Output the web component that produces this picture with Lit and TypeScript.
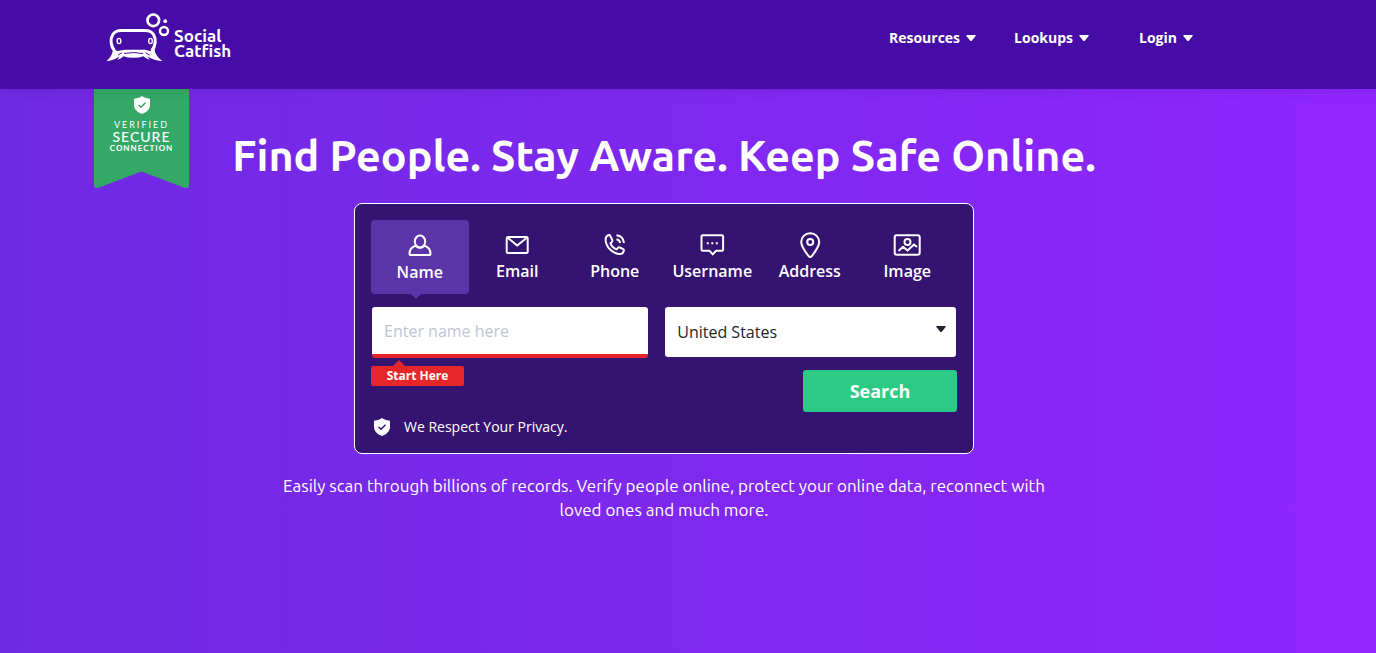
import { LitElement, html, css, svg } from "lit";
import { customElement, state } from "lit/decorators.js";

const icons: Record<string, unknown> = {
  Name: svg`<ellipse cx="14" cy="9.500" rx="5.200" ry="6"/><path d="M9.800 13.800c-4 1-6.300 4-6.300 8.200q0 .9.900.9h19.200q.9 0 .9-.9c0-4.200-2.300-7.200-6.300-8.200-2.200 2.500-6.200 2.500-8.400 0z"/>`,
  Email: svg`<rect x="3.700" y="6" width="21" height="16" rx="1.500"/><path d="M5 7l9.200 7.500L23.500 7"/>`,
  Phone: svg`<path d="M9.300 4.800l2 4.300c.3.700.1 1.300-.4 1.800l-1.500 1.300c.9 2.500 3.600 5.300 6.200 6.200l1.300-1.500c.5-.6 1.100-.7 1.800-.4l3.300 1.500c.7.300 1 .9.9 1.600-.4 2-1.600 3.400-3.800 3.400C11.800 23 4.600 16 4.600 8.500c0-2.300 1.300-3.900 3.200-4.500.7-.2 1.200.1 1.500.8z"/><path d="M15.500 8.300c2 .3 3.300 1.700 3.700 3.700M15.500 4.300c4.300.5 7 3.300 7.500 7.700"/>`,
  Username: svg`<path d="M4.800 4.200h19q1.300 0 1.300 1.300v13q0 1.300-1.300 1.300h-5.800L14.800 23.400l-3.200-3.600H4.800q-1.300 0-1.300-1.300v-13q0-1.300 1.300-1.300z"/><path d="M8.800 12.200h2M13.300 12.200h2M17.800 12.200h2"/>`,
  Address: svg`<path d="M14.200 2.300c-5.200 0-9 3.900-9 8.700 0 3.700 3.200 8.700 7.300 14q1.700 1.800 3.400 0C20 19.700 23.200 14.700 23.200 11c0-4.800-3.800-8.700-9-8.700z"/><circle cx="14.200" cy="11" r="3"/>`,
  Image: svg`<rect x="1.700" y="4.300" width="25" height="19.500" rx="2"/><circle cx="14.500" cy="11" r="3"/><path d="M5.500 20l4.500-4.300 4.500 3.700 6.500-6 3 2.600"/>`,
};

const shield = html`<svg class="shield" viewBox="0 0 16 18" aria-hidden="true">
  <path fill="currentColor" d="M8 0c2 1.500 4.500 2.300 7 2.500q1 .1 1 1v5.500c0 4-3.200 7.300-8 9-4.800-1.700-8-5-8-9V3.500q0-.9 1-1C3.500 2.300 6 1.500 8 0z"/>
  <path class="tick" d="M4.700 9l2.300 2.300 4.500-4.500"/>
</svg>`;

@customElement("app-root")
export class AppRoot extends LitElement {
  @state() private active = "Name";

  static styles = css`
    :host {
      display: block;
      min-height: 100vh;
      background: linear-gradient(90deg, #6e2ae1, #9026ff);
      color: #fff;
      font-family: "Open Sans", "Noto Sans", sans-serif;
    }
    * { box-sizing: border-box; }
    button, input, select { font: inherit; color: inherit; }
    button { border: 0; background: none; padding: 0; cursor: pointer; }
    .bar {
      position: relative;
      z-index: 2;
      background: #450da6;
      padding-right: 48px;
      box-shadow: 0 2px 10px rgba(0, 0, 0, 0.08);
    }
    .inner { max-width: 1140px; margin: 0 auto; }
    .top {
      display: flex;
      justify-content: space-between;
      align-items: flex-start;
      height: 89px;
      padding: 12px 41px 0 12px;
    }
    .brand {
      display: flex;
      color: #fff;
      text-decoration: none;
      font: 700 17px/15px Ubuntu, "Noto Sans", sans-serif;
    }
    .brand svg { width: 64px; height: 52px; }
    .brand span { padding: 16px 0 0 4px; }
    nav { display: flex; gap: 38px; padding-top: 16px; }
    nav button {
      display: flex;
      align-items: center;
      gap: 6px;
      font-size: 14px;
      font-weight: 700;
      line-height: 20px;
    }
    nav button:last-child { margin-left: 12px; }
    .caret { width: 10px; height: 6px; fill: currentColor; }
    main { padding-right: 48px; }
    .hero {
      position: relative;
      display: flex;
      flex-direction: column;
      align-items: center;
    }
    .ribbon {
      position: absolute;
      z-index: 0;
      left: 0;
      top: 0;
      width: 95px;
      height: 99px;
      padding-top: 7px;
      text-align: center;
      font-family: Lato, sans-serif;
    }
    .ribbon .flag { position: absolute; inset: 0; z-index: -1; }
    .ribbon span { display: block; }
    .ribbon .shield { display: block; margin: 0 auto 5px; color: #fff; --tick: #33a867; }
    .small { font-size: 9px; line-height: 11px; letter-spacing: 2px; }
    .big { font-size: 14px; line-height: 13px; letter-spacing: 1px; font-weight: 500; }
    .mid { font-size: 8px; line-height: 11px; letter-spacing: 1px; font-weight: 700; }
    .shield { width: 16px; height: 18px; flex: none; }
    .tick { fill: none; stroke: var(--tick); stroke-width: 1.500; }
    h1 {
      margin: 39px 0 0;
      font: 700 43px/54px Ubuntu, "Noto Sans", sans-serif;
      text-align: center;
    }
    .card {
      width: 620px;
      max-width: 100%;
      margin-top: 21px;
      padding: 16px;
      border: 1px solid #fff;
      border-radius: 8px;
      background: #351370;
    }
    .tabs { display: grid; grid-template-columns: repeat(6, 1fr); margin-right: 1px; }
    .tab {
      position: relative;
      display: flex;
      flex-direction: column;
      align-items: center;
      height: 74px;
      padding-top: 11px;
      border-radius: 4px;
      font-size: 16px;
      font-weight: 600;
      line-height: 24px;
    }
    .tab svg {
      width: 28px;
      height: 28px;
      fill: none;
      stroke: currentColor;
      stroke-width: 2;
      stroke-linejoin: round;
    }
    .tab.on { background: #5b34a8; padding-top: 12px; }
    .tab.on::after {
      content: "";
      position: absolute;
      top: 100%;
      left: 40px;
      border: 5px solid transparent;
      border-top-color: #5b34a8;
      border-bottom: 0;
    }
    .fields {
      display: grid;
      grid-template-columns: 19fr 20fr;
      gap: 17px;
      margin: 13px 1px 0;
    }
    .fields input {
      width: 100%;
      height: 51px;
      padding: 0 12px;
      border: 0;
      border-bottom: 4px solid #e3242b;
      border-radius: 3px;
      background: #fff;
      color: #212529;
      font-size: 16px;
      outline: none;
    }
    .fields input::placeholder { color: #bcc5d3; opacity: 1; }
    .pick { position: relative; }
    .pick select {
      width: 100%;
      height: 50px;
      padding: 0 12px;
      appearance: none;
      border: 0;
      border-radius: 3px;
      background: #fff;
      color: #212529;
      font-size: 16px;
    }
    .pick .caret {
      position: absolute;
      right: 10px;
      top: 19px;
      color: #1f2335;
      pointer-events: none;
    }
    .actions {
      display: flex;
      justify-content: space-between;
      align-items: flex-start;
      margin-top: 12px;
    }
    .actions .hint {
      position: relative;
      width: 93px;
      margin-top: -4px;
      border-radius: 2px;
      background: #e7262b;
      font-size: 12px;
      font-weight: 700;
      line-height: 20px;
      text-align: center;
    }
    .hint::before {
      content: "";
      position: absolute;
      bottom: 100%;
      left: 22px;
      border: 6px solid transparent;
      border-bottom-color: #e7262b;
      border-top: 0;
    }
    .search {
      width: 154px;
      height: 42px;
      border-radius: 3px;
      background: #2bcb85;
      font-size: 18px;
      font-weight: 700;
    }
    .privacy {
      display: flex;
      align-items: center;
      gap: 14px;
      margin: 5px 0 0 3px;
      font-size: 14px;
      line-height: 20px;
    }
    .privacy .shield { --tick: #351370; }
    .lead {
      max-width: 800px;
      margin: 20px 0 0;
      font: 400 17px/24px Ubuntu, "Noto Sans", sans-serif;
      text-align: center;
    }
  `;

  private caret() {
    return html`<svg class="caret" viewBox="0 0 10 6" aria-hidden="true"><path d="M1 0h8q1.300 0 .6 1L6 5.400q-1 1-2 0L.4 1Q-.3 0 1 0z"/></svg>`;
  }

  render() {
    return html`
      <header class="bar">
        <div class="inner top">
          <a class="brand" href="#" aria-label="Social Catfish">
            <svg viewBox="0 0 64 52" fill="none" stroke="#fff" aria-hidden="true">
              <circle cx="47.300" cy="8.300" r="5.800" stroke-width="2.700"/>
              <circle cx="58" cy="19" r="4" stroke-width="2.400"/>
              <circle cx="59.200" cy="9.200" r="1.900" fill="#fff" stroke="none"/>
              <path stroke-width="3" d="M8.500 38.500C4.500 34 4 27 6.800 22.500 8.800 19.300 11.500 18.500 15 18.500h24c3.500 0 6.500.8 8.500 4 2.800 4.500 2.300 11.500-1.700 16"/>
              <ellipse cx="13" cy="29" rx="1.800" ry="2.600" stroke-width="1.400"/>
              <ellipse cx="44.500" cy="29" rx="1.800" ry="2.600" stroke-width="1.400"/>
              <path fill="#fff" stroke="none" d="M7 36.500q0 7-6.500 12.700 8-1 13-5l-2 3.500q4-1.200 6-3.400 4 1.500 10 1.500t10-1.500q2 2.200 6 3.400l-2-3.500q5 4 15 5-8-5.700-8-12.700l-4.500 2.500-5-1.200H19l-8 1.200z"/>
              <path stroke="#450da6" stroke-width="1" d="M18 41.500q9.500-2 19 0M12 43.200l4-2.500M43.500 43.200l-4-2.500"/>
            </svg>
            <span>Social<br />Catfish</span>
          </a>
          <nav aria-label="Main">
            ${["Resources", "Lookups", "Login"].map((t) => html`<button type="button">${t}${this.caret()}</button>`)}
          </nav>
        </div>
      </header>
      <main>
        <div class="inner hero">
          <div class="ribbon">
            <svg class="flag" viewBox="0 0 95 99" aria-hidden="true"><path fill="#33a867" d="M0 0h95v96q0 4-4 3L47.500 82.500 4 99q-4 1-4-3z"/></svg>
            ${shield}
            <span class="small">VERIFIED</span>
            <span class="big">SECURE</span>
            <span class="mid">CONNECTION</span>
          </div>
          <h1>Find People. Stay Aware. Keep Safe Online.</h1>
          <form class="card" @submit=${(e: Event) => e.preventDefault()}>
            <div class="tabs" role="tablist">
              ${Object.keys(icons).map(
                (t) => html`<button type="button" role="tab" class="tab ${t === this.active ? "on" : ""}"
                  aria-selected=${t === this.active ? "true" : "false"} @click=${() => (this.active = t)}>
                  <svg viewBox="0 0 28 28" aria-hidden="true">${icons[t]}</svg>${t}</button>`
              )}
            </div>
            <div class="fields">
              <input type="text" aria-label="Name" placeholder="Enter name here" />
              <div class="pick">
                <select aria-label="Country"><option>United States</option></select>
                ${this.caret()}
              </div>
            </div>
            <div class="actions">
              <div class="hint">Start Here</div>
              <button class="search" type="submit">Search</button>
            </div>
            <div class="privacy">${shield}<span>We Respect Your Privacy.</span></div>
          </form>
          <p class="lead">Easily scan through billions of records. Verify people online, protect your online data, reconnect with loved ones and much more.</p>
        </div>
      </main>
    `;
  }
}
